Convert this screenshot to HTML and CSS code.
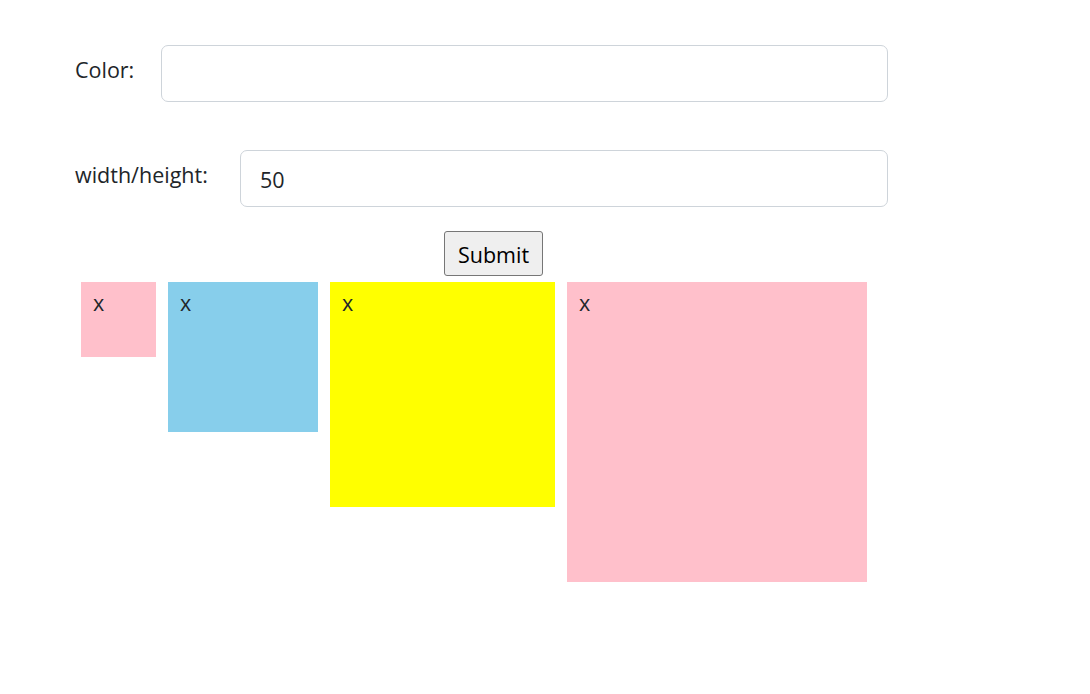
FILE: index.html
```html
<!DOCTYPE html>
<html lang="en">
<head>
<meta charset="utf-8">
<title>Boxes</title>
<link rel="stylesheet" href="styles.css">
</head>
<body>
<main class="page">
  <form class="form">
    <div class="row row-color">
      <label class="label label-color" for="color">Color:</label>
      <input class="input" id="color" type="text">
    </div>
    <div class="row row-size">
      <label class="label label-size" for="size">width/height:</label>
      <input class="input" id="size" type="text" value="50">
    </div>
    <div class="actions">
      <button class="submit" type="button">Submit</button>
    </div>
  </form>
  <div class="boxes">
    <div class="box box-pink box-75">x</div>
    <div class="box box-blue box-150">x</div>
    <div class="box box-yellow box-225">x</div>
    <div class="box box-pink box-300">x</div>
  </div>
</main>
</body>
</html>
```

FILE: styles.css
```css
* { box-sizing: border-box; }
html, body { margin: 0; padding: 0; background: #fff; }
body {
  font-family: "Open Sans", "Noto Sans", "Liberation Sans", sans-serif;
  font-size: 21.5px;
  line-height: 30px;
  color: #212529;
}
.page {
  padding: 45px 0 0 75px;
  width: 888px;
}
.form { display: flex; flex-direction: column; }
.row { display: flex; align-items: flex-start; }
.row-size { margin-top: 48px; }
.label {
  margin-top: 10px;
  flex: 0 0 auto;
  white-space: nowrap;
}
.label-color { width: 86px; }
.label-size { width: 165px; }
.input {
  flex: 1 1 auto;
  height: 57px;
  border: 1px solid #ced4da;
  border-radius: 7px;
  padding: 2px 19px 0;
  font: inherit;
  color: #212529;
  background: #fff;
  outline: none;
}
.actions {
  margin-top: 24px;
  padding-left: 369px;
  display: flex;
}
.submit {
  width: 99px;
  height: 45px;
  padding: 3px 0 0;
  font: inherit;
  color: #000;
  background: #efefef;
  border: 1px solid #767676;
  border-radius: 3px;
}
.boxes {
  display: flex;
  align-items: flex-start;
}
.box {
  margin: 6px;
  padding: 6px 12px;
}
.box-pink { background: #ffc0cb; }
.box-blue { background: #87ceeb; }
.box-yellow { background: #ffff00; }
.box-75 { width: 75px; height: 75px; }
.box-150 { width: 150px; height: 150px; }
.box-225 { width: 225px; height: 225px; }
.box-300 { width: 300px; height: 300px; }
```
